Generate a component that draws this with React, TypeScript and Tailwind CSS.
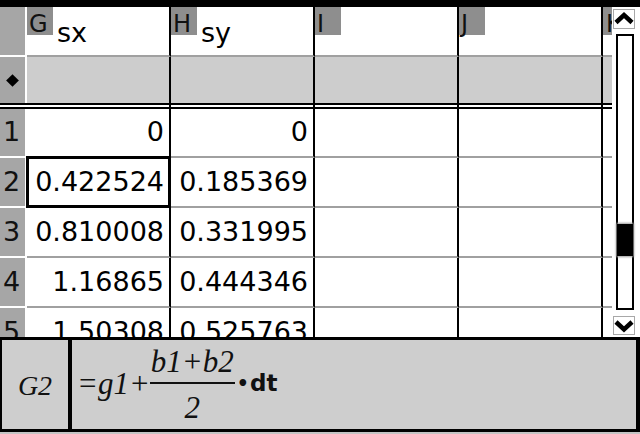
const cols = [
  { letter: "G", name: "sx" },
  { letter: "H", name: "sy" },
  { letter: "I", name: "" },
  { letter: "J", name: "" },
];

const rows = [
  ["0", "0"],
  ["0.422524", "0.185369"],
  ["0.810008", "0.331995"],
  ["1.16865", "0.444346"],
  ["1.50308", "0.525763"],
];

const Chevron = ({ down }: { down?: boolean }) => (
  <svg width="20" height="18" viewBox="0 0 20 18">
    <polyline
      points={down ? "2,5 10,12.5 18,5" : "2,12.5 10,5 18,12.5"}
      fill="none"
      stroke="black"
      strokeWidth="4.5"
      strokeLinejoin="miter"
    />
  </svg>
);

const Scrollbar = () => (
  <div className="flex w-[28px] shrink-0 flex-col bg-white">
    <div className="ml-[1px] mt-[2px] flex h-[20px] w-[22px] items-center justify-center border border-[#a8a8a8] bg-white">
      <Chevron />
    </div>
    <div className="relative ml-[4px] mt-[5px] h-[276px] w-[18px] border-2 border-black bg-white">
      <div className="absolute -left-[1px] -right-[1px] top-[188px] h-[32px] bg-black shadow-[0_0_2px_1px_#9a9a9a]" />
    </div>
    <div className="ml-[1px] mt-[6px] flex h-[19px] w-[22px] items-center justify-center border border-[#a8a8a8] bg-white">
      <Chevron down />
    </div>
  </div>
);

const LabelCell = ({ children, h }: { children?: React.ReactNode; h: string }) => (
  <div className={`flex w-[25px] shrink-0 items-center border-b-2 border-white bg-[#a6a6a6] pl-[3px] ${h}`}>
    {children}
  </div>
);

const Grid = () => (
  <div className="flex w-[612px] shrink-0 flex-col">
    {/* header */}
    <div className="flex h-[50px] shrink-0">
      <div className="w-[25px] shrink-0 border-b-2 border-white bg-[#a6a6a6]" />
      <div className="w-[2px] shrink-0 bg-white" />
      {cols.map((c) => (
        <div
          key={c.letter}
          className="flex w-[144px] shrink-0 items-start border-b-2 border-r-2 border-b-[#a0a0a0] border-r-black bg-white"
        >
          <div className="h-[28px] w-[26px] shrink-0 bg-[#8e8e8e] pl-[2px] pt-[5px] text-[24px] leading-none text-[#111]">
            {c.letter}
          </div>
          <span className="ml-[4px] mt-[12px] text-[27px] leading-none text-black">{c.name}</span>
        </div>
      ))}
      <div className="w-[9px] shrink-0 overflow-hidden border-b-2 border-b-[#a0a0a0] bg-white">
        <div className="h-[28px] w-[9px] bg-[#8e8e8e] pl-[3px] pt-[5px] text-[24px] leading-none text-[#111]">
          K
        </div>
      </div>
    </div>

    {/* formula row */}
    <div className="flex h-[46px] shrink-0">
      <div className="flex w-[25px] shrink-0 items-center justify-center bg-[#a6a6a6]">
        <div className="h-[9px] w-[9px] rotate-45 bg-black" />
      </div>
      <div className="w-[2px] shrink-0 bg-white" />
      {cols.map((c) => (
        <div key={c.letter} className="w-[144px] shrink-0 border-r-2 border-black bg-[#cdcdcd]" />
      ))}
      <div className="w-[9px] shrink-0 bg-[#cdcdcd]" />
    </div>

    {/* double rule */}
    <div className="flex h-[6px] shrink-0 border-y-2 border-black bg-white">
      <div className="w-[27px] shrink-0" />
      {cols.map((c) => (
        <div key={c.letter} className="w-[144px] shrink-0 border-r-2 border-black" />
      ))}
    </div>

    {/* data */}
    {rows.map((r, i) => {
      const h = i === 0 ? "h-[49px]" : "h-[50px]";
      return (
        <div key={i} className={`flex shrink-0 ${h}`}>
          <LabelCell h={h}>
            <span className="text-[27px] text-[#111]">{i + 1}</span>
          </LabelCell>
          <div className="w-[2px] shrink-0 bg-white" />
          {cols.map((c, j) => (
            <div
              key={c.letter}
              className="relative flex w-[144px] shrink-0 items-center justify-end border-b-2 border-r-2 border-b-[#a0a0a0] border-r-black bg-white pr-[5px]"
            >
              <span className="text-[27px] text-black">{r[j] ?? ""}</span>
              {i === 1 && j === 0 && (
                <div className="absolute -bottom-[2px] -left-[1px] -right-[2px] -top-[2px] border-[3px] border-black" />
              )}
            </div>
          ))}
          <div className="w-[9px] shrink-0 border-b-2 border-b-[#a0a0a0] bg-white" />
        </div>
      );
    })}
  </div>
);

const FormulaBar = () => (
  <div className="h-[97px] shrink-0 bg-[#c4c4c4]">
    <div className="flex h-[95px] border-b-[3px] border-l-2 border-r-4 border-t-[3px] border-black bg-[#cecece] font-['Liberation_Serif',serif] italic">
      <div className="flex w-[70px] shrink-0 items-center justify-center border-r-4 border-black pt-[2px] text-[28px] text-[#111]">
        G2
      </div>
      <div className="flex items-center pl-[5px] text-[#111]">
        <span className="mt-[-1px] text-[31px]">=g1+</span>
        <span className="flex flex-col items-center text-[31px]">
          <span className="px-[1px] leading-[31px]">b1+b2</span>
          <span className="mt-[5px] h-[2px] w-full bg-[#111]" />
          <span className="mt-[8px] leading-[31px]">2</span>
        </span>
        <span className="ml-[2px] mt-[-3px] font-['DejaVu_Sans',sans-serif] text-[19px] font-bold not-italic">
          •
        </span>
        <span className="ml-[1px] mt-[-3px] font-['DejaVu_Sans',sans-serif] text-[23px] font-bold not-italic">
          dt
        </span>
      </div>
    </div>
  </div>
);

export default function App() {
  return (
    <div className="flex h-[434px] w-[640px] flex-col overflow-hidden bg-white font-['DejaVu_Sans',sans-serif]">
      <div className="h-[7px] shrink-0 bg-black" />
      <div className="flex h-[330px] shrink-0 overflow-hidden">
        <Grid />
        <Scrollbar />
      </div>
      <FormulaBar />
    </div>
  );
}
